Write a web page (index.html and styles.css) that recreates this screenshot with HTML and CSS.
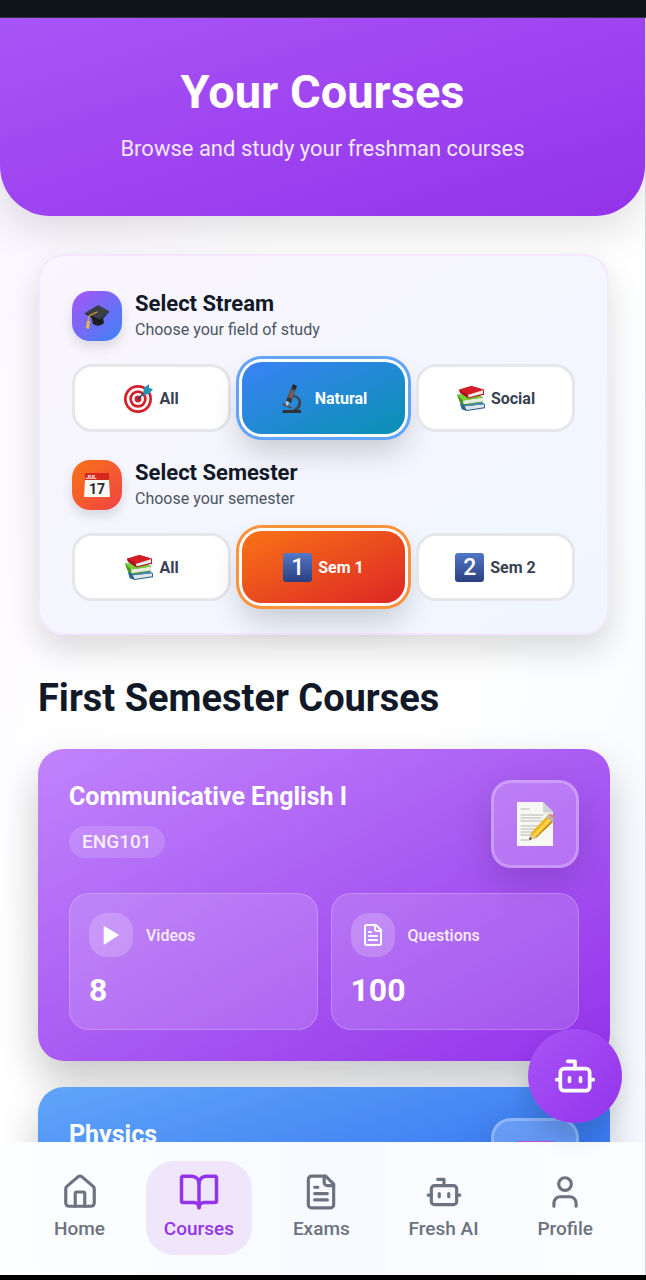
FILE: index.html
```
<!DOCTYPE html>
<html lang="en">
<head>
  <meta charset="UTF-8" />
  <meta name="viewport" content="width=device-width, initial-scale=1.0" />
  <title>Your Courses</title>
  <link rel="stylesheet" href="styles.css">
</head>
<body>
  <!-- Shared drawings -->
  <svg class="defs" aria-hidden="true">
    <symbol id="books" viewBox="0 0 30 28">
      <path d="M4 19l18-3 8 4v4L11 27l-5-2z" fill="#2b6293"/>
      <path d="M9 22l20-2v3l-18 3z" fill="#e3e6e8"/>
      <path d="M4 19l18-4 8 5-20 2z" fill="#4789b9"/>
      <path d="M1 10l19-1 8 4v5L8 21l-4-3z" fill="#3e941d"/>
      <path d="M7 16l21-3v4L8 20z" fill="#e7eadf"/>
      <path d="M1 10l18-2 9 5-21 3z" fill="#78cf38"/>
      <path d="M3 5l13-4 13 4v5l-16 4-9-6z" fill="#a80e1c"/>
      <path d="M12 9l16-4v4l-15 4z" fill="#eceae6"/>
      <path d="M3 5l13-4 13 4-16 5z" fill="#d51c27"/>
    </symbol>
    <symbol id="doc" viewBox="0 0 24 24">
      <path d="M15 2H6a2 2 0 0 0-2 2v16a2 2 0 0 0 2 2h12a2 2 0 0 0 2-2V7z"/>
      <path d="M14 2v4a2 2 0 0 0 2 2h4M10 9H8M16 13H8M16 17H8"/>
    </symbol>
    <symbol id="bot" viewBox="0 0 24 24">
      <path d="M12 8V4H8"/>
      <rect x="4" y="8" width="16" height="12" rx="2"/>
      <path d="M2 14h2M20 14h2M15 13v2M9 13v2"/>
    </symbol>
  </svg>

  <div class="app">
    <div class="status-bar"></div>

    <main class="content">
      <header class="hero">
        <h1>Your Courses</h1>
        <p>Browse and study your freshman courses</p>
      </header>

      <!-- Filters -->
      <section class="filters">
        <div class="filter-head">
          <span class="filter-icon stream">
            <svg class="art" viewBox="0 0 26 26">
              <path d="M7 12l12 3 1 5q-5 5-11 1z" fill="#1c1f22"/>
              <path d="M1 10l13-8 11 6-9 9z" fill="#393f44"/>
              <path d="M1 10l15 7 9-9v1l-9 10L1 11z" fill="#17191b"/>
              <path d="M13 9l-8 4-1 6" fill="none" stroke="#d9a62e" stroke-width="1.3"/>
              <path d="M3 18h3l-1 8-3-1z" fill="#eab83b"/>
            </svg>
          </span>
          <div>
            <h2>Select Stream</h2>
            <p>Choose your field of study</p>
          </div>
        </div>
        <div class="options">
          <button type="button">
            <svg class="art" viewBox="0 0 29 29">
              <circle cx="14" cy="15" r="14" fill="#d4202a"/>
              <circle cx="14" cy="15" r="11.3" fill="#fff"/>
              <circle cx="14" cy="15" r="8.7" fill="#d4202a"/>
              <circle cx="14" cy="15" r="6" fill="#fff"/>
              <circle cx="14" cy="15" r="3.4" fill="#d4202a"/>
              <path d="M14 15l9-9" stroke="#174e68" stroke-width="1.6"/>
              <path d="M19 9l1-5 5-4v4l4 1-4 5-5 1z" fill="#2193b5"/>
            </svg>
            All
          </button>
          <button type="button" class="active blue">
            <svg class="art" viewBox="0 0 29 29">
              <path d="M3 26h18v3H2z" fill="#303235"/>
              <path d="M13 13q7 1 5 7-1 4-6 6h6q4-4 3-9-1-5-7-6z" fill="#414448"/>
              <path d="M3 19l9 4-1 2-9-4z" fill="#50555a"/>
              <path d="M12 2l4 2-5 15-5-2z" fill="#3a3535"/>
              <path d="M11 5l4 2-3 8-4-2z" fill="#765d54"/>
              <path d="M13 0l4 2-1 3-4-2z" fill="#242629"/>
              <path d="M6 17l3 1-1 4-2-1z" fill="#c4c8ca"/>
            </svg>
            Natural
          </button>
          <button type="button"><svg class="art"><use href="#books"/></svg>Social</button>
        </div>

        <div class="filter-head">
          <span class="filter-icon semester">
            <svg class="art" viewBox="0 0 26 26">
              <path d="M1 1h24v8H1z" fill="#d5281f"/>
              <path d="M1 8h24l1 17H0z" fill="#f8f8f6"/>
              <text x="2" y="7" font-size="6" font-weight="700" fill="#fff">JUL</text>
              <text x="13" y="22" font-size="14" font-weight="700" text-anchor="middle" fill="#292b2d">17</text>
            </svg>
          </span>
          <div>
            <h2>Select Semester</h2>
            <p>Choose your semester</p>
          </div>
        </div>
        <div class="options">
          <button type="button"><svg class="art"><use href="#books"/></svg>All</button>
          <button type="button" class="active orange"><span class="keycap">1</span>Sem 1</button>
          <button type="button"><span class="keycap">2</span>Sem 2</button>
        </div>
      </section>

      <!-- Courses -->
      <section class="courses">
        <h2>First Semester Courses</h2>

        <article class="course purple">
          <div class="course-top">
            <div>
              <h3>Communicative English I</h3>
              <span class="code">ENG101</span>
            </div>
            <span class="course-icon">
              <svg class="art" viewBox="0 0 44 44">
                <path d="M4 0h26l10 10v34H4z" fill="#f7f7f3"/>
                <path d="M30 0v10h10z" fill="#d0d1d2"/>
                <path d="M30 10h10v8z" fill="#e5e5e3"/>
                <path d="M8 7h8M8 13h22M8 16h20M8 19h21M8 24h17M8 27h15M8 30h13M8 33h10M8 38h9" fill="none" stroke="#a6a7a6" stroke-width=".8"/>
                <path d="M16 38l2-7 16-17 6 5-17 17z" fill="#efb51f"/>
                <path d="M20 33l16-17 2 2-16 17z" fill="#ffd54e"/>
                <path d="M22 36l17-17 1 1-17 16z" fill="#bc7a12"/>
                <path d="M33 15l2-2 6 5-2 2z" fill="#b5b7b8"/>
                <path d="M35 13q3-2 5 0t1 5z" fill="#e58a7c"/>
                <path d="M16 38l2-7 5 5z" fill="#e7c58d"/>
                <path d="M16 38l1-3 2 2z" fill="#333"/>
              </svg>
            </span>
          </div>
          <div class="stats">
            <div class="stat">
              <div class="stat-head">
                <span class="stat-icon">
                  <svg class="play" viewBox="0 0 24 24"><path d="M4 2l17 10-17 11z"/></svg>
                </span>
                Videos
              </div>
              <strong>8</strong>
            </div>
            <div class="stat">
              <div class="stat-head">
                <span class="stat-icon">
                  <svg><use href="#doc"/></svg>
                </span>
                Questions
              </div>
              <strong>100</strong>
            </div>
          </div>
        </article>

        <article class="course sky">
          <div class="course-top">
            <h3>Physics</h3>
            <span class="course-icon">
              <svg class="art" viewBox="0 0 44 44">
                <rect x="1" y="1" width="42" height="42" rx="5" fill="#b44fd0"/>
                <g fill="none" stroke="#fff" stroke-width="2">
                  <ellipse cx="22" cy="22" rx="17" ry="7"/>
                  <ellipse cx="22" cy="22" rx="17" ry="7" transform="rotate(60 22 22)"/>
                  <ellipse cx="22" cy="22" rx="17" ry="7" transform="rotate(120 22 22)"/>
                </g>
                <circle cx="22" cy="22" r="3" fill="#fff"/>
              </svg>
            </span>
          </div>
        </article>
      </section>
    </main>

    <div class="bottom">
      <button type="button" class="fab" aria-label="Fresh AI">
        <svg><use href="#bot"/></svg>
      </button>

      <nav class="tabs">
        <a href="#home">
          <svg viewBox="0 0 24 24"><path d="M15 21v-8a1 1 0 0 0-1-1h-4a1 1 0 0 0-1 1v8"/><path d="M3 10a2 2 0 0 1 .709-1.528l7-5.999a2 2 0 0 1 2.582 0l7 5.999A2 2 0 0 1 21 10v9a2 2 0 0 1-2 2H5a2 2 0 0 1-2-2z"/></svg>
          Home
        </a>
        <a href="#courses" class="current">
          <svg viewBox="0 0 24 24"><path d="M12 7v14"/><path d="M3 18a1 1 0 0 1-1-1V4a1 1 0 0 1 1-1h5a4 4 0 0 1 4 4 4 4 0 0 1 4-4h5a1 1 0 0 1 1 1v13a1 1 0 0 1-1 1h-6a3 3 0 0 0-3 3 3 3 0 0 0-3-3z"/></svg>
          Courses
        </a>
        <a href="#exams">
          <svg><use href="#doc"/></svg>
          Exams
        </a>
        <a href="#fresh-ai">
          <svg><use href="#bot"/></svg>
          Fresh AI
        </a>
        <a href="#profile">
          <svg viewBox="0 0 24 24"><path d="M19 21v-2a4 4 0 0 0-4-4H9a4 4 0 0 0-4 4v2"/><circle cx="12" cy="7" r="4"/></svg>
          Profile
        </a>
      </nav>
    </div>
  </div>
</body>
</html>
```
FILE: styles.css
```
* {
  box-sizing: border-box;
}

body {
  margin: 0;
  font-family: Roboto, sans-serif;
  color: #111827;
  background: #000;
}

h1, h2, h3, p {
  margin: 0;
}

button {
  font-family: inherit;
  cursor: pointer;
}

svg {
  fill: none;
  stroke: currentColor;
  stroke-width: 2;
  stroke-linecap: round;
  stroke-linejoin: round;
}

.art {
  stroke: none;
}

.defs {
  display: none;
}

.app {
  display: flex;
  flex-direction: column;
  height: 100vh;
  padding-bottom: 5px;
}

.status-bar {
  flex: none;
  height: 18px;
  background: #0f141b;
  border-bottom: 1px solid #33343f;
}

.content {
  flex: 1;
  min-height: 0;
  overflow-y: auto;
  scrollbar-width: none;
  background: linear-gradient(110deg, #faf5ff, #ffffff 35%, #ffffff 65%, #f5f9ff);
  border-right: 1px solid #d1d5db;
}

/* Header */
.hero {
  padding: 46px 24px 51px;
  text-align: center;
  color: #fff;
  background: linear-gradient(to bottom right, #a855f7, #9333ea);
  border-radius: 0 0 50px 50px;
  box-shadow: 0 16px 40px rgba(0, 0, 0, 0.12);
}

.hero h1 {
  font-size: 47px;
  line-height: 56px;
}

.hero p {
  margin-top: 13px;
  font-size: 22px;
  line-height: 32px;
  color: #f3e8ff;
}

/* Filters */
.filters {
  margin: 38px 36px 0 38px;
  padding: 34px 32px 32px;
  border: 2px solid #f3e8ff;
  border-radius: 26px;
  background: linear-gradient(to bottom right, #faf5ff, #eff6ff);
  box-shadow: 0 16px 32px rgba(0, 0, 0, 0.14);
}

.filter-head {
  display: flex;
  align-items: center;
  gap: 13px;
  margin-bottom: 22px;
}

.filter-head h2 {
  font-size: 22px;
  line-height: 28px;
}

.filter-head p {
  font-size: 16px;
  line-height: 24px;
  color: #4b5563;
}

.filter-icon {
  display: flex;
  justify-content: center;
  align-items: center;
  width: 50px;
  height: 50px;
  border-radius: 18px;
  box-shadow: 0 6px 12px rgba(0, 0, 0, 0.12);
}

.filter-icon svg {
  width: 26px;
  height: 26px;
}

.filter-icon.stream {
  background: linear-gradient(to bottom right, #a855f7, #3b82f6);
}

.filter-icon.semester {
  background: linear-gradient(to bottom right, #f97316, #ef4444);
}

.options {
  display: grid;
  grid-template-columns: repeat(3, 1fr);
  gap: 13px;
}

.options + .filter-head {
  margin-top: 27px;
}

.options button {
  display: flex;
  justify-content: center;
  align-items: center;
  gap: 6px;
  height: 68px;
  padding: 0;
  font-size: 16px;
  font-weight: 700;
  color: #374151;
  background: #fff;
  border: 3px solid #e5e7eb;
  border-radius: 20px;
}

.options svg {
  width: 29px;
  height: 29px;
}

.keycap {
  width: 29px;
  height: 29px;
  font-size: 23px;
  font-weight: 500;
  line-height: 29px;
  text-align: center;
  color: #fff;
  background: linear-gradient(#5277c7, #2b3f80);
  border-radius: 3px;
}

.options .active {
  height: 72px;
  margin: -2px;
  color: #fff;
  border: none;
}

.options .blue {
  background: linear-gradient(to bottom right, #3b82f6, #0891b2);
  box-shadow: 0 0 0 3px #fff, 0 0 0 6px #60a5fa, 0 16px 32px rgba(0, 0, 0, 0.2);
}

.options .orange {
  background: linear-gradient(to bottom right, #f97316, #dc2626);
  box-shadow: 0 0 0 3px #fff, 0 0 0 6px #fb923c, 0 16px 32px rgba(0, 0, 0, 0.2);
}

/* Courses */
.courses {
  display: flex;
  flex-direction: column;
  gap: 26px;
  padding: 38px 35px 38px 38px;
}

.courses h2 {
  font-size: 38px;
  line-height: 50px;
}

.course {
  padding: 31px;
  color: #fff;
  border-radius: 26px;
  box-shadow: 0 20px 40px rgba(0, 0, 0, 0.22);
}

.course.purple {
  background: linear-gradient(to bottom right, #c084fc, #9333ea);
}

.course.sky {
  background: linear-gradient(to bottom right, #60a5fa, #2563eb);
}

.course-top {
  display: flex;
  justify-content: space-between;
  margin-bottom: 25px;
}

.course h3 {
  margin-bottom: 12px;
  font-size: 25px;
  line-height: 34px;
}

.code {
  display: inline-block;
  padding: 0 13px;
  font-size: 19px;
  font-weight: 500;
  line-height: 32px;
  color: #f7eeff;
  background: rgba(255, 255, 255, 0.15);
  border-radius: 16px;
}

.course-icon {
  display: flex;
  justify-content: center;
  align-items: center;
  width: 88px;
  height: 88px;
  background: rgba(255, 255, 255, 0.2);
  border: 3px solid rgba(255, 255, 255, 0.25);
  border-radius: 20px;
  box-shadow: 0 12px 36px rgba(0, 0, 0, 0.14);
}

.course-icon svg {
  width: 44px;
  height: 44px;
}

.stats {
  display: grid;
  grid-template-columns: 1fr 1fr;
  gap: 13px;
}

.stat {
  padding: 19px;
  background: rgba(255, 255, 255, 0.15);
  border: 1px solid rgba(255, 255, 255, 0.2);
  border-radius: 20px;
}

.stat-head {
  display: flex;
  align-items: center;
  gap: 13px;
  margin-bottom: 13px;
  font-size: 16px;
  font-weight: 500;
  color: #f7eeff;
}

.stat-icon {
  display: flex;
  justify-content: center;
  align-items: center;
  width: 44px;
  height: 44px;
  color: #fff;
  background: rgba(255, 255, 255, 0.2);
  border-radius: 18px;
}

.stat-icon svg {
  width: 24px;
  height: 24px;
}

.stat-icon .play {
  width: 22px;
  fill: currentColor;
  stroke: none;
}

.stat strong {
  display: block;
  font-size: 32px;
  line-height: 40px;
}

/* Bottom navigation */
.bottom {
  position: relative;
  flex: none;
}

.fab {
  position: absolute;
  right: 24px;
  bottom: calc(100% + 19px);
  display: flex;
  justify-content: center;
  align-items: center;
  width: 94px;
  height: 94px;
  padding: 0;
  color: #fff;
  background: linear-gradient(to bottom right, #a855f7, #9333ea);
  border: none;
  border-radius: 50%;
  box-shadow: 0 12px 24px rgba(0, 0, 0, 0.15);
}

.fab svg {
  width: 44px;
  height: 44px;
}

.tabs {
  display: flex;
  justify-content: space-between;
  padding: 19px 34px 20px 36px;
  background: linear-gradient(90deg, #fdfeff, #f8faff 50%, #fcfdff);
  border-right: 1px solid #d1d5db;
}

.tabs a {
  display: flex;
  flex-direction: column;
  align-items: center;
  gap: 4px;
  padding: 12px 18px;
  font-size: 19px;
  font-weight: 500;
  line-height: 28px;
  color: #6b7280;
  text-decoration: none;
  border-radius: 28px;
}

.tabs svg {
  width: 38px;
  height: 38px;
}

.tabs .current {
  color: #9333ea;
  background: #f0e6fc;
}

.tabs .current svg {
  width: 42px;
  height: 42px;
  margin: -2px;
}
```
